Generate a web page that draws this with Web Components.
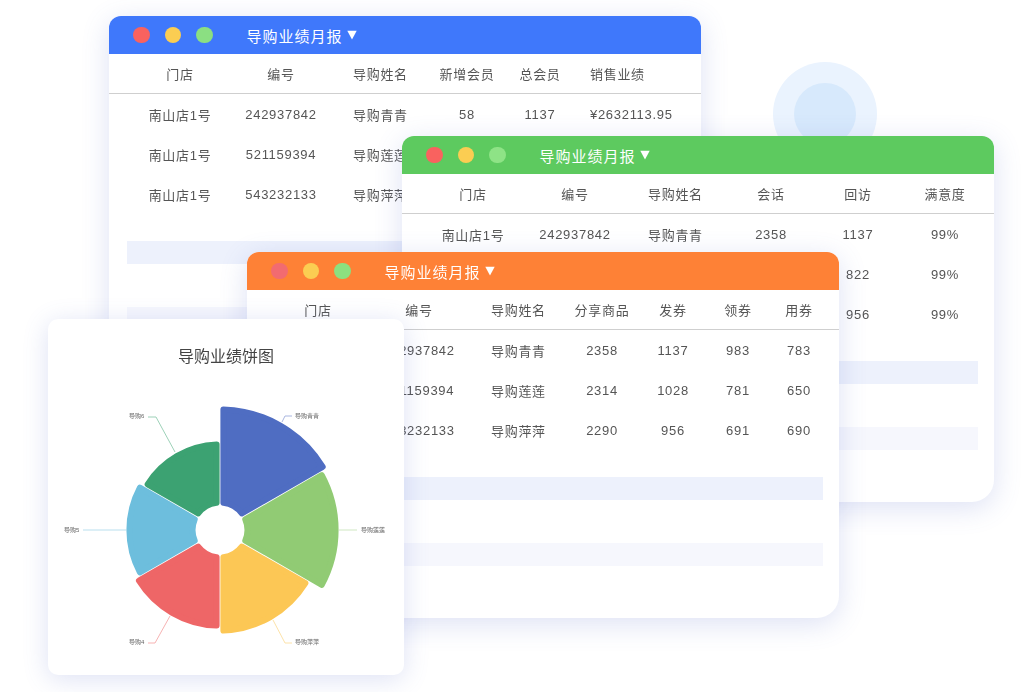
<!DOCTYPE html>
<html lang="zh">
<head>
<meta charset="utf-8">
<title>导购业绩月报</title>
<style>
  html, body { margin: 0; height: 100%; background: #fff; overflow: hidden; }
  body { font-family: "Liberation Sans", "Noto Sans CJK SC", sans-serif; color: #555; }
</style>
</head>
<body>
<report-desktop>
  <report-window slot="windows" style="left:109px;top:16px;z-index:1;--head:#3f78fb;--cols:100px 102px 91px 88px 58px 1fr;--dot1:#f9625f;--dot2:#fbcd52;--dot3:#8bdf82;--bars-left:18px;--bars-right:16px;">
    <report-row head><span>门店</span><span>编号</span><span class="l">导购姓名</span><span>新增会员</span><span>总会员</span><span class="l">销售业绩</span></report-row>
    <report-row><span>南山店1号</span><span>242937842</span><span class="l">导购青青</span><span>58</span><span>1137</span><span class="l">¥2632113.95</span></report-row>
    <report-row><span>南山店1号</span><span>521159394</span><span class="l">导购莲莲</span></report-row>
    <report-row><span>南山店1号</span><span>543232133</span><span class="l">导购萍萍</span></report-row>
  </report-window>

  <report-window slot="windows" style="left:402px;top:136px;z-index:2;--head:#5dca5f;--cols:100px 104px 94px 100px 74px 100px;--dot1:#f9625f;--dot2:#fbcd52;--dot3:#8ee386;--bars-left:16px;--bars-right:16px;">
    <report-row head><span>门店</span><span>编号</span><span class="l">导购姓名</span><span>会话</span><span>回访</span><span>满意度</span></report-row>
    <report-row><span>南山店1号</span><span>242937842</span><span class="l">导购青青</span><span>2358</span><span>1137</span><span>99%</span></report-row>
    <report-row><span>南山店1号</span><span>521159394</span><span class="l">导购莲莲</span><span>2314</span><span>822</span><span>99%</span></report-row>
    <report-row><span>南山店1号</span><span>543232133</span><span class="l">导购萍萍</span><span>2290</span><span>956</span><span>99%</span></report-row>
  </report-window>

  <report-window slot="windows" style="left:247px;top:252px;z-index:3;--head:#fe8136;--cols:100px 102px 94px 76px 66px 64px 58px;--dot1:#f26b70;--dot2:#fbcd52;--dot3:#8ce07f;--bars-left:16px;--bars-right:16px;">
    <report-row head><span>门店</span><span>编号</span><span class="l">导购姓名</span><span>分享商品</span><span>发券</span><span>领券</span><span>用券</span></report-row>
    <report-row><span>南山店1号</span><span>242937842</span><span class="l">导购青青</span><span>2358</span><span>1137</span><span>983</span><span>783</span></report-row>
    <report-row><span>南山店1号</span><span>521159394</span><span class="l">导购莲莲</span><span>2314</span><span>1028</span><span>781</span><span>650</span></report-row>
    <report-row><span>南山店1号</span><span>543232133</span><span class="l">导购萍萍</span><span>2290</span><span>956</span><span>691</span><span>690</span></report-row>
  </report-window>

  <pie-card slot="windows" style="left:48px;top:319px;z-index:4;"></pie-card>
</report-desktop>

<script>
/**
 * Free canvas that holds the overlapping windows and the two pale circles behind them.
 */
class ReportDesktop extends HTMLElement {
    constructor() {
        super();
        this.attachShadow({ mode: 'open' });
    }

    connectedCallback() {
        this.shadowRoot.innerHTML = `
      <style>
        :host { display: block; position: relative; width: 1034px; height: 692px; overflow: hidden; filter: blur(0.3px); }
        .halo { position: absolute; left: 773px; top: 62px; width: 104px; height: 104px; border-radius: 50%; background: #eaf3fe; display: flex; align-items: center; justify-content: center; }
        .halo i { width: 62px; height: 62px; border-radius: 50%; background: #d7e9fc; }
      </style>
      <div class="halo"><i></i></div>
      <slot name="windows"></slot>
    `;
    }
}

/**
 * One report window: coloured title bar with traffic lights, then the slotted rows
 * and the two empty placeholder bars.
 */
class ReportWindow extends HTMLElement {
    constructor() {
        super();
        this.attachShadow({ mode: 'open' });
    }

    connectedCallback() {
        this.shadowRoot.innerHTML = `
      <style>
        :host {
          display: flex;
          flex-direction: column;
          position: absolute;
          box-sizing: border-box;
          width: 592px;
          height: 366px;
          background: #fff;
          border-radius: 12px 12px 22px 22px;
          box-shadow: 0 6px 28px rgba(84, 104, 200, 0.2);
        }
        .bar {
          display: flex;
          align-items: center;
          flex: none;
          height: 38px;
          padding-left: 24px;
          background: var(--head);
          border-radius: 12px 12px 0 0;
          color: #fff;
        }
        .dots { display: flex; gap: 15px; margin-right: 34px; }
        .dots i { width: 16.5px; height: 16.5px; border-radius: 50%; }
        .title { font-size: 15px; letter-spacing: 1px; margin-right: 4px; }
        .rows { display: flex; flex-direction: column; }
        .fill { height: 23px; flex: none; margin-left: var(--bars-left); margin-right: var(--bars-right); }
        .fill.a { margin-top: 27px; background: #edf1fc; }
        .fill.b { margin-top: 43px; background: #f6f7fd; }
      </style>
      <div class="bar">
        <div class="dots">
          <i style="background:var(--dot1)"></i><i style="background:var(--dot2)"></i><i style="background:var(--dot3)"></i>
        </div>
        <span class="title">导购业绩月报</span>
        <svg width="10" height="10" viewBox="0 0 10 10"><path d="M0.3 0.8H9.7L5 9.4Z" fill="#fff"/></svg>
      </div>
      <div class="rows"><slot></slot></div>
      <div class="fill a"></div>
      <div class="fill b"></div>
    `;
    }
}

/**
 * Table row. Children are the cells; columns come from the --cols custom property.
 */
class ReportRow extends HTMLElement {
    constructor() {
        super();
        this.attachShadow({ mode: 'open' });
    }

    connectedCallback() {
        this.shadowRoot.innerHTML = `
      <style>
        :host {
          display: grid;
          grid-template-columns: var(--cols);
          align-items: center;
          box-sizing: border-box;
          height: 40px;
          padding-left: 21px;
          font-size: 13px;
          letter-spacing: 0.7px;
          color: #555;
          white-space: nowrap;
        }
        :host([head]) { height: 40px; border-bottom: 1px solid #cfcfcf; }
        ::slotted(span) { text-align: center; }
        ::slotted(.l) { text-align: left; padding-left: 21px; }
      </style>
      <slot></slot>
    `;
    }
}

/**
 * Card with the rose pie. Each slice is 60 degrees with its own radius; corners are
 * rounded by stroking an inset outline in the slice's own colour.
 */
class PieCard extends HTMLElement {
    constructor() {
        super();
        this.attachShadow({ mode: 'open' });
    }

    slicePath(cx, cy, r0, r1, a0, a1, inset) {
        const pt = (r, a) => [cx + r * Math.sin(a), cy - r * Math.cos(a)];
        const ri = r0 + inset;
        const ro = r1 - inset;
        const p1 = pt(ri, a0 + Math.asin(inset / ri));
        const p2 = pt(ro, a0 + Math.asin(inset / ro));
        const p3 = pt(ro, a1 - Math.asin(inset / ro));
        const p4 = pt(ri, a1 - Math.asin(inset / ri));
        const f = (p) => p[0].toFixed(2) + ' ' + p[1].toFixed(2);
        return `M${f(p1)}L${f(p2)}A${ro} ${ro} 0 0 1 ${f(p3)}L${f(p4)}A${ri} ${ri} 0 0 0 ${f(p1)}Z`;
    }

    connectedCallback() {
        const slices = [
            { r: 124, color: '#4f6dc2' },
            { r: 119, color: '#91cb74' },
            { r: 104, color: '#fcc755' },
            { r: 99, color: '#ee6667' },
            { r: 94, color: '#6dbedd' },
            { r: 89, color: '#3ca272' },
        ];
        const ox = -48;
        const oy = -375;
        const step = Math.PI / 3;
        const paths = slices.map((s, i) => {
            const d = this.slicePath(220, 530, 24, s.r, i * step, (i + 1) * step, 3.4);
            return `<path d="${d}" fill="${s.color}" stroke="${s.color}" stroke-width="6" stroke-linejoin="round"/>`;
        }).join('');

        const labels = [
            { line: '282 422 285 416 292 416', color: '#a9b6e0', x: 295, y: 417.5, text: '导购青青' },
            { line: '339 530 357 530', color: '#cfe7c2', x: 361, y: 531.5, text: '导购莲莲' },
            { line: '273 620 285 643 292 643', color: '#fde3aa', x: 295, y: 644, text: '导购萍萍' },
            { line: '170 616 155 643 148 643', color: '#f7b3b3', x: 129, y: 644, text: '导购4' },
            { line: '126 530 83 530', color: '#b9dfee', x: 64, y: 531.5, text: '导购5' },
            { line: '175 452 156 417 148 417', color: '#9dd1b8', x: 129, y: 417.5, text: '导购6' },
        ].map((l) => `
          <polyline points="${l.line}" fill="none" stroke="${l.color}" stroke-width="1"/>
          <text x="${l.x}" y="${l.y}">${l.text}</text>`).join('');

        this.shadowRoot.innerHTML = `
      <style>
        :host {
          display: flex;
          flex-direction: column;
          align-items: center;
          position: absolute;
          width: 356px;
          height: 356px;
          background: #fff;
          border-radius: 10px;
          box-shadow: 0 4px 26px rgba(84, 104, 200, 0.2);
        }
        h2 { margin: 28px 0 0 0; height: 20px; font-size: 16px; line-height: 20px; font-weight: 400; color: #444; }
        svg { display: block; flex: none; margin-top: 8px; }
        text { font-size: 6px; fill: #666; }
      </style>
      <h2>导购业绩饼图</h2>
      <svg width="356" height="300" viewBox="48 375 356 300">${paths}${labels}</svg>
    `;
    }
}

customElements.define('report-desktop', ReportDesktop);
customElements.define('report-window', ReportWindow);
customElements.define('report-row', ReportRow);
customElements.define('pie-card', PieCard);
</script>
</body>
</html>
